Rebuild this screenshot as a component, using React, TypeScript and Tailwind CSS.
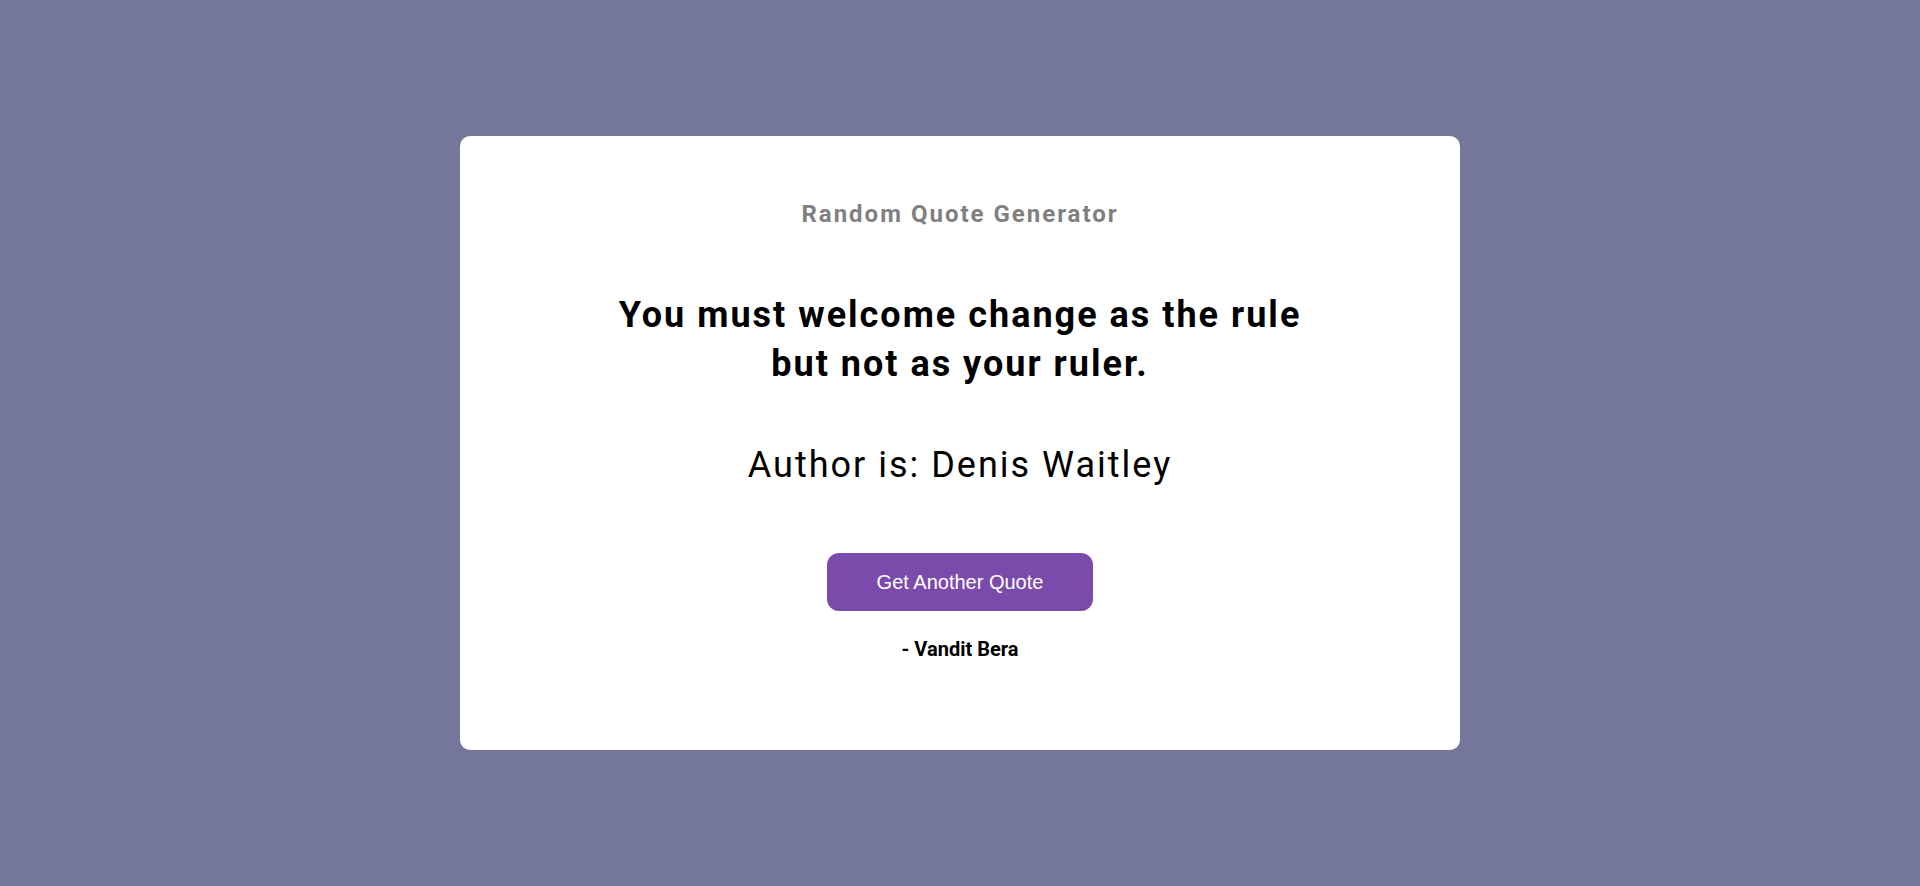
export default function App() {
  return (
    <div className="min-h-screen w-full bg-[#75769b] flex items-center justify-center font-['Roboto',sans-serif]">
      {/* Card */}
      <div className="w-[1000px] bg-white rounded-[10px] pt-[64px] pb-[89px] flex flex-col items-center text-center">
        <h2 className="text-[24px] leading-[28px] font-bold tracking-[2px] text-[#808080]">
          Random Quote Generator
        </h2>
        <h1 className="mt-[63px] w-[710px] text-[36px] leading-[49px] font-bold tracking-[2px] text-black">
          You must welcome change as the rule but not as your ruler.
        </h1>
        <p className="mt-[55px] text-[36px] leading-[42px] tracking-[2px] text-black">
          Author is: Denis Waitley
        </p>
        <button className="mt-[67px] w-[266px] h-[58px] rounded-[12px] bg-[#7b4bab] text-white text-[20px] font-['Liberation_Sans',Arial,sans-serif]">
          Get Another Quote
        </button>
        <p className="mt-[26px] text-[20px] leading-[24px] font-bold text-black">- Vandit Bera</p>
      </div>
    </div>
  );
}
